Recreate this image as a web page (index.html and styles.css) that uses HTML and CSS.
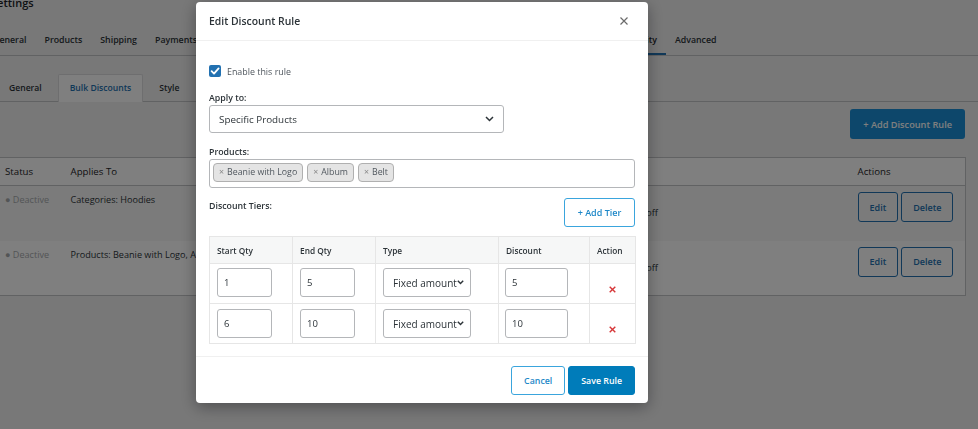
FILE: index.html
```html
<!DOCTYPE html>
<html lang="en">
<head>
<meta charset="utf-8">
<title>Edit Discount Rule</title>
<link rel="stylesheet" href="styles.css">
</head>
<body>
<div class="wrap">
  <h1 class="page-title">Settings</h1>
  <nav class="nav-tabs">
    <a class="nav-tab">General</a>
    <a class="nav-tab">Products</a>
    <a class="nav-tab">Shipping</a>
    <a class="nav-tab">Payments</a>
    <a class="nav-tab">Accounts &amp; Privacy</a>
    <a class="nav-tab">Emails</a>
    <a class="nav-tab">Integration</a>
    <a class="nav-tab">Site visibility</a>
    <a class="nav-tab">Subscriptions</a>
    <a class="nav-tab active">Bulk Order Quantity</a>
    <a class="nav-tab">Advanced</a>
  </nav>

  <div class="subtabs">
    <a class="subtab">General</a>
    <a class="subtab active">Bulk Discounts</a>
    <a class="subtab">Style</a>
  </div>

  <div class="toolbar">
    <button class="btn-primary">+ Add Discount Rule</button>
  </div>

  <table class="rules">
    <colgroup>
      <col class="c-status"><col class="c-applies"><col class="c-tiers"><col class="c-actions">
    </colgroup>
    <thead>
      <tr><th>Status</th><th>Applies To</th><th>Tiers</th><th>Actions</th></tr>
    </thead>
    <tbody>
      <tr class="odd">
        <td class="status">● Deactive</td>
        <td>Categories: Hoodies</td>
        <td class="tiers"><div>1 - 5 qty: 5</div><div>fixed amount off</div></td>
        <td class="actions"><button class="btn-outline">Edit</button><button class="btn-outline">Delete</button></td>
      </tr>
      <tr>
        <td class="status">● Deactive</td>
        <td>Products: Beanie with Logo, Album, Belt</td>
        <td class="tiers"><div>1 - 5 qty: 5</div><div>fixed amount off</div></td>
        <td class="actions"><button class="btn-outline">Edit</button><button class="btn-outline">Delete</button></td>
      </tr>
    </tbody>
  </table>
</div>

<div class="overlay"></div>

<div class="modal">
  <div class="modal-header">
    <span class="modal-title">Edit Discount Rule</span>
    <span class="modal-close">
      <svg width="8" height="8" viewBox="0 0 8 8"><path d="M0.5 0.5 L7.5 7.5 M7.5 0.5 L0.5 7.5" stroke="#6b6b6b" stroke-width="1.2" fill="none"/></svg>
    </span>
  </div>

  <div class="modal-body">
    <div class="check-row">
      <span class="checkbox">
        <svg width="12" height="12" viewBox="0 0 12 12"><path d="M2.6 6.2 L5 8.6 L9.6 3.4" stroke="#fff" stroke-width="1.8" fill="none" stroke-linecap="round" stroke-linejoin="round"/></svg>
      </span>
      <span class="check-label">Enable this rule</span>
    </div>

    <div class="field-label">Apply to:</div>
    <div class="select select-main">
      <span class="select-text">Specific Products</span>
      <svg width="9" height="6" viewBox="0 0 9 6"><path d="M1 1 L4.5 4.5 L8 1" stroke="#2c3338" stroke-width="1.5" fill="none"/></svg>
    </div>

    <div class="field-label products-label">Products:</div>
    <div class="tag-box">
      <span class="tag"><span class="tag-x">×</span>Beanie with Logo</span>
      <span class="tag"><span class="tag-x">×</span>Album</span>
      <span class="tag"><span class="tag-x">×</span>Belt</span>
    </div>

    <div class="tiers-head">
      <span class="field-label tiers-label">Discount Tiers:</span>
      <button class="btn-light">+ Add Tier</button>
    </div>

    <table class="tiers-table">
      <colgroup>
        <col class="t-start"><col class="t-end"><col class="t-type"><col class="t-disc"><col class="t-act">
      </colgroup>
      <thead>
        <tr><th>Start Qty</th><th>End Qty</th><th>Type</th><th>Discount</th><th>Action</th></tr>
      </thead>
      <tbody>
        <tr>
          <td><input class="qty" type="text" value="1"></td>
          <td><input class="qty" type="text" value="5"></td>
          <td><div class="select select-type"><span class="select-text">Fixed amount</span><svg width="7" height="5" viewBox="0 0 7 5"><path d="M0.8 0.8 L3.5 3.6 L6.2 0.8" stroke="#2c3338" stroke-width="1.4" fill="none"/></svg></div></td>
          <td class="disc-cell"><input class="disc" type="text" value="5"></td>
          <td class="act-cell"><svg width="7" height="7" viewBox="0 0 7 7"><path d="M0.7 0.7 L6.3 6.3 M6.3 0.7 L0.7 6.3" stroke="#d63638" stroke-width="1.4" fill="none"/></svg></td>
        </tr>
        <tr>
          <td><input class="qty" type="text" value="6"></td>
          <td><input class="qty" type="text" value="10"></td>
          <td><div class="select select-type"><span class="select-text">Fixed amount</span><svg width="7" height="5" viewBox="0 0 7 5"><path d="M0.8 0.8 L3.5 3.6 L6.2 0.8" stroke="#2c3338" stroke-width="1.4" fill="none"/></svg></div></td>
          <td class="disc-cell"><input class="disc" type="text" value="10"></td>
          <td class="act-cell"><svg width="7" height="7" viewBox="0 0 7 7"><path d="M0.7 0.7 L6.3 6.3 M6.3 0.7 L0.7 6.3" stroke="#d63638" stroke-width="1.4" fill="none"/></svg></td>
        </tr>
      </tbody>
    </table>
  </div>

  <div class="modal-footer">
    <button class="btn-cancel">Cancel</button>
    <button class="btn-save">Save Rule</button>
  </div>
</div>
</body>
</html>
```

FILE: styles.css
```css
* { box-sizing: border-box; }
html, body { margin: 0; height: 100%; }
body {
  background: #f0f0f1;
  font-family: "Open Sans", "Noto Sans", sans-serif;
  color: #1d2327;
  overflow: hidden;
}
button { font-family: inherit; cursor: pointer; }

.wrap { margin: 0 13px 0 -16px; }

.page-title {
  margin: -4px 0 0;
  padding-left: 7px;
  height: 14px;
  font-size: 11px;
  line-height: 14px;
  font-weight: 600;
}

.nav-tabs {
  display: flex;
  height: 46px;
  margin-right: -13px;
  border-bottom: 1px solid #c3c4c7;
}
.nav-tab {
  padding: 23px 9px 8px;
  line-height: 14px;
  font-size: 8.8px;
  font-weight: 600;
  color: #2c3338;
  white-space: nowrap;
}
.nav-tab.active { box-shadow: inset 0 -2px 0 #2271b1; color: #1d2327; }

.subtabs {
  display: flex;
  gap: 4px;
  margin: 18px -13px 0 13px;
  height: 28px;
  border-bottom: 1px solid #c3c4c7;
}
.subtab {
  height: 28px;
  padding: 0 11px;
  line-height: 26px;
  font-size: 8.6px;
  font-weight: 600;
  color: #2c3338;
  border: 1px solid transparent;
  border-bottom: none;
  border-radius: 2px 2px 0 0;
}
.subtab.active { background: #fff; border-color: #dcdcde; color: #2271b1; }

.toolbar { display: flex; justify-content: flex-end; margin-top: 7px; }
.btn-primary {
  height: 30px;
  padding: 0 13px;
  border: 0;
  border-radius: 3px;
  background: #1a8fd6;
  color: #fff;
  font-size: 9.2px;
  font-weight: 600;
}

.rules {
  margin: 18px 0 0 12px;
  width: calc(100% - 12px);
  border-collapse: collapse;
  background: #fff;
  border: 1px solid #c3c4c7;
  table-layout: fixed;
}
.c-status { width: 66px; }
.c-applies { width: 517px; }
.c-tiers { width: 270px; }
.c-actions { width: 116px; }
.rules th {
  height: 28px;
  padding: 0 8px;
  text-align: left;
  font-size: 9.7px;
  font-weight: 400;
  color: #1d2327;
  border-bottom: 1px solid #c3c4c7;
}
.rules td {
  height: 55px;
  padding: 7px 8px 0;
  vertical-align: top;
  font-size: 9.1px;
  line-height: 14px;
  color: #2c3338;
  white-space: nowrap;
}
.rules tr.odd td { background: #f6f7f7; }
.rules td.status { color: #a7aaad; }
.rules td.tiers { padding-top: 6px; }
.rules td.actions { padding-top: 6px; }
.btn-outline {
  height: 30px;
  padding: 0 11px;
  margin-right: 3px;
  background: transparent;
  border: 1px solid #2271b1;
  border-radius: 3px;
  color: #2271b1;
  font-size: 9px;
  font-weight: 600;
}

.overlay {
  position: fixed;
  inset: 0;
  background: rgba(0, 0, 0, 0.5);
}

.modal {
  position: fixed;
  left: 196px;
  top: 2px;
  width: 452px;
  height: 401px;
  background: #fff;
  border-radius: 4px;
  box-shadow: 0 4px 16px rgba(0, 0, 0, 0.35);
  display: flex;
  flex-direction: column;
}
.modal-header {
  height: 39px;
  flex: none;
  padding: 0 13px;
  display: flex;
  align-items: center;
  justify-content: space-between;
  border-bottom: 1px solid #f0f0f0;
}
.modal-title {
  font-size: 10.4px;
  font-weight: 600;
  color: #2c3338;
}
.modal-close { display: flex; margin-right: 7px; }

.modal-body {
  flex: 1;
  padding: 23px 13px 12px;
}
.check-row { display: flex; align-items: center; gap: 6px; height: 14px; }
.checkbox {
  width: 12px; height: 12px;
  border-radius: 2px;
  background: #2271b1;
  display: flex;
}
.check-label { font-size: 8.9px; color: #50575e; }

.field-label {
  display: block;
  margin-top: 13px;
  font-size: 8.8px;
  line-height: 14px;
  font-weight: 600;
  color: #2c3338;
}
.products-label { margin-top: 12px; }

.select {
  display: flex;
  align-items: center;
  justify-content: space-between;
  border: 1px solid #b4b6b9;
  border-radius: 3px;
  background: #fff;
  color: #2c3338;
}
.select-main {
  width: 295px;
  height: 28px;
  padding: 0 9px;
  font-size: 9.85px;
}
.select-text { white-space: nowrap; overflow: hidden; min-width: 0; }

.tag-box {
  height: 29px;
  border: 1px solid #b4b6b9;
  border-radius: 3px;
  padding: 3px;
  display: flex;
  gap: 4px;
}
.tag {
  height: 19px;
  padding: 0 5px;
  line-height: 17px;
  background: #e4e4e4;
  border: 1px solid #b0b0b0;
  border-radius: 4px;
  font-size: 8.8px;
  color: #50575e;
  white-space: nowrap;
}
.tag-x { color: #888; margin-right: 3px; }

.tiers-head {
  display: flex;
  justify-content: space-between;
  align-items: flex-start;
  margin-top: 10px;
}
.tiers-label { margin-top: 0; line-height: 16px; }
.btn-light {
  width: 71px;
  height: 29px;
  padding: 0;
  background: #fff;
  border: 1px solid #3aa5dd;
  border-radius: 3px;
  color: #1e88c8;
  font-size: 9px;
  font-weight: 600;
}

.tiers-table {
  margin-top: 9px;
  width: 426px;
  border-collapse: collapse;
  table-layout: fixed;
}
.t-start { width: 83px; }
.t-end { width: 83px; }
.t-type { width: 123px; }
.t-disc { width: 91px; }
.t-act { width: 46px; }
.tiers-table th {
  height: 27px;
  padding: 0 7px;
  text-align: left;
  background: #f6f7f7;
  border: 1px solid #e6e6e6;
  font-size: 8.3px;
  font-weight: 600;
  color: #2c3338;
}
.tiers-table td {
  height: 40px;
  padding: 4px 7px 0;
  vertical-align: top;
  border: 1px solid #e6e6e6;
}
.tiers-table tbody tr + tr td { padding-top: 5px; }
.qty, .disc {
  display: block;
  height: 29px;
  border: 1px solid #b4b6b9;
  border-radius: 3px;
  padding: 0 6px;
  font-family: inherit;
  font-size: 9.5px;
  color: #2c3338;
  background: #fff;
  outline: none;
}
.qty { width: 55px; }
.disc { width: 63px; }
.tiers-table td.disc-cell { padding-left: 6px; }
.select-type {
  width: 88px;
  height: 29px;
  padding: 0 6px 0 9px;
  font-size: 10px;
}
.select-type svg { flex: none; margin-left: -2px; }
.tiers-table td.act-cell {
  text-align: center;
  padding-top: 22px;
  line-height: 0;
}
.tiers-table tbody tr + tr td.act-cell { padding-top: 22px; }

.modal-footer {
  flex: none;
  border-top: 1px solid #f0f0f0;
  padding: 9px 13px 9px;
  display: flex;
  justify-content: flex-end;
  gap: 3px;
}
.btn-cancel, .btn-save {
  height: 29px;
  padding: 0 12px;
  border-radius: 3px;
  font-size: 8.8px;
  font-weight: 600;
  white-space: nowrap;
}
.btn-cancel {
  background: #fff;
  border: 1px solid #3aa5dd;
  color: #1e88c8;
}
.btn-save {
  background: #007cba;
  border: 1px solid #007cba;
  color: #fff;
}
```
